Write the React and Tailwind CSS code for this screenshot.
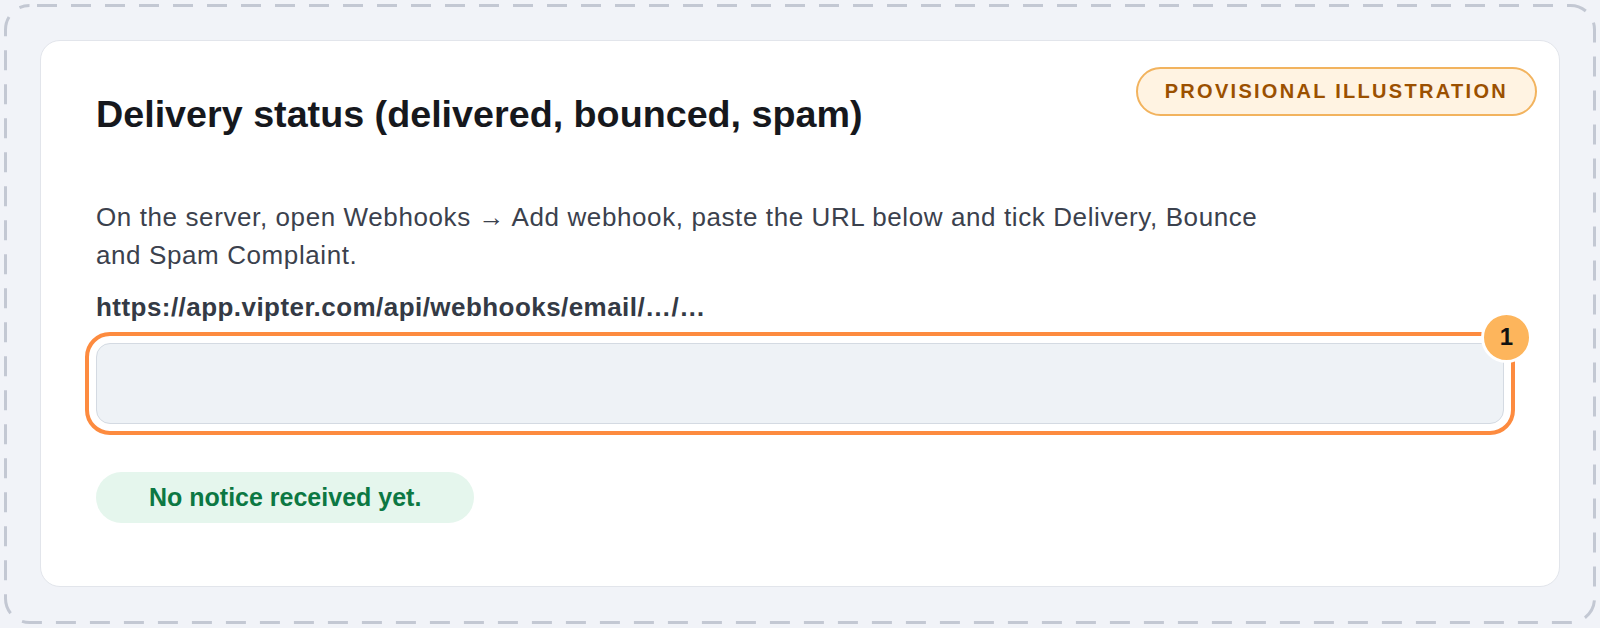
import React from "react";

export default function App() {
  return (
    <div
      className="relative w-[1600px] h-[628px] bg-[#f1f3f8] p-10"
      style={{ fontFamily: '"Liberation Sans", Arial, Helvetica, sans-serif' }}
    >
      <svg
        className="pointer-events-none absolute inset-0"
        width="1600"
        height="628"
        viewBox="0 0 1600 628"
        fill="none"
      >
        <rect
          x="5.5"
          y="5.5"
          width="1589"
          height="617"
          rx="24"
          stroke="#c3c8d3"
          strokeWidth="3"
          strokeDasharray="20 14"
          strokeDashoffset="26.5"
        />
      </svg>

      <div className="relative h-[547px] rounded-[20px] border border-[#e2e5eb] bg-white px-[55px] pt-[51px]">
        <span className="absolute right-[22px] top-[26px] rounded-full border-2 border-[#f2b35e] bg-[#fff3e2] px-[27px] py-[10px] text-[20px] font-bold uppercase leading-[25px] tracking-[0.115em] text-[#9b5000]">
          Provisional illustration
        </span>

        <h2 className="text-[37.7px] font-bold leading-[45px] text-[#16181d]">
          Delivery status (delivered, bounced, spam)
        </h2>

        <p className="mt-[62px] max-w-[1190px] text-[26px] leading-[37.5px] tracking-[0.6px] text-[#3b414d]">
          On the server, open Webhooks → Add webhook, paste the URL below and tick Delivery, Bounce and Spam Complaint.
        </p>

        <p className="mt-[15px] text-[26px] font-semibold leading-[37.5px] tracking-[0.45px] text-[#343a45]">
          https://app.vipter.com/api/webhooks/email/…/…
        </p>

        <div className="relative mt-[16px]">
          <div className="h-[81px] w-full rounded-[14px] border border-[#d4dae2] bg-[#eef2f6] outline-4 outline-offset-[7px] outline-[#fd8b3f]" />
          <span className="absolute right-[-28px] top-[-31px] flex h-[51px] w-[51px] items-center justify-center rounded-full border-[3px] border-white bg-[#fdb55c] text-[24px] font-bold leading-none text-[#111]">
            1
          </span>
        </div>

        <div className="mt-[48px] inline-flex rounded-full bg-[#e5f6ed] px-[53px] py-[10px] text-[25px] font-bold leading-[31px] text-[#0c7843]">
          No notice received yet.
        </div>
      </div>
    </div>
  );
}
